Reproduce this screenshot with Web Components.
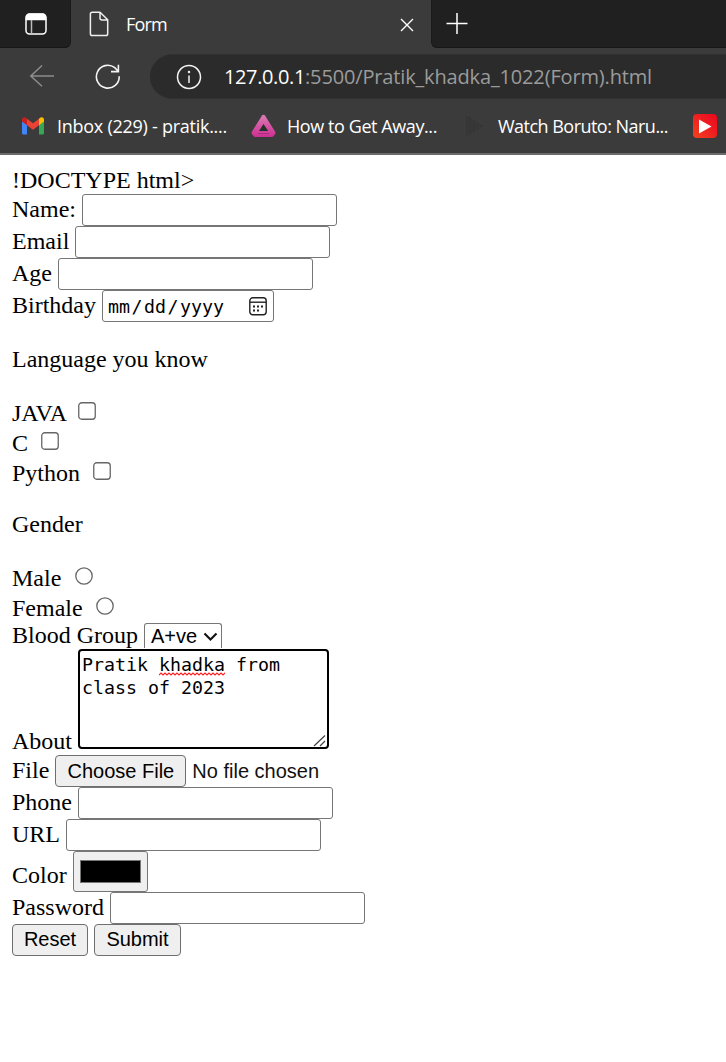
<!DOCTYPE html>
<html lang="en">
<head>
<meta charset="utf-8">
<title>Form</title>
<style>
body{margin:0;background:#fff;color:#000;font:24px/28px "Liberation Serif",serif}
</style>
</head>
<body>
<browser-chrome></browser-chrome>
<student-form></student-form>
<script>
const define=(name,css,html,ready)=>customElements.define(name,class extends HTMLElement{
  connectedCallback(){
    if(this.shadowRoot)return;
    const t=document.createElement('template');
    t.innerHTML=`<style>*{box-sizing:border-box}svg{display:block}${css}</style>${html}`;
    this.attachShadow({mode:'open'}).append(t.content.cloneNode(true));
    if(ready)ready(this,this.shadowRoot);
  }
});

/* Text that spreads its letters to fill the width given in its "w" attribute. */
define('fit-text',':host{display:block;flex:none;white-space:pre}span{display:inline-block}','<span><slot></slot></span>',(el,root)=>{
  const s=root.querySelector('span'),w=+el.getAttribute('w');
  el.style.width=w+'px';
  s.style.letterSpacing=(w-s.getBoundingClientRect().width)/el.textContent.length+'px';
});

define('book-mark',`:host{display:flex;align-items:center;height:28px;flex:none;gap:var(--gap,12px)}
.icon{display:flex}`,'<span class="icon"><slot name="icon"></slot></span><slot></slot>');

define('browser-chrome',`
:host{display:block;box-sizing:border-box;height:155px;background:#3b3b3b;border-bottom:2px solid #6b6b6b;color:#fff;font:18px/28px "Open Sans","Noto Sans",sans-serif;overflow:hidden}
.tabs{display:flex;height:48px;background:#3b3b3b}
.lead{width:71px;background:#202020;border-radius:0 0 6px 0;border-bottom:1px solid #161616;border-right:1px solid #1a1a1a;padding:13px 0 0 25px}
.tab{width:360px;display:flex;background:#3b3b3b;padding:0 0 0 18px;position:relative}
.tab fit-text{margin:10px 0 0 17px}
.tab .doc{margin-top:11px}
.tab .x{margin:18px 0 0 233px}
.rest{flex:1;background:#202020;border-radius:0 0 0 6px;border-bottom:1px solid #161616;border-left:1px solid #1a1a1a;padding:13px 0 0 14px}
.nav{display:flex;height:51px;padding:6px 0 0 28px}
.back{margin-top:10px}.load{margin:9px 0 0 39px}
.bar{flex:1;margin-left:28px;height:45px;background:#2b2b2b;border-radius:23px 0 0 23px;display:flex;align-items:center;padding-left:26px;font-size:20px;border-top:1px solid #303030;border-bottom:1px solid #303030}
.host{margin-left:22px}.path{color:#9b9b9b}
.marks{display:flex;height:54px;padding:13px 0 0 22px;font-size:18px}
.b1{--gap:13px}.b2{margin-left:24px;--gap:11px}.b3{margin-left:26px;--gap:13px}.b4{margin-left:25px}
`,`
<div class="tabs">
 <div class="lead"><svg width="22" height="22" viewBox="0 0 22 22" fill="none" stroke="#fff" stroke-width="1.5"><rect x="1" y="1" width="20" height="20" rx="3.5"/><path d="M1.5 4.5A3 3 0 0 1 4.5 1.3h13a3 3 0 0 1 3 3.2v2h-19z" fill="#fff"/><path d="M6.5 7v14" stroke="#bbb"/></svg></div>
 <div class="tab"><svg class="doc" width="20" height="26" viewBox="0 0 20 26" fill="none" stroke="#eee" stroke-width="1.5" stroke-linejoin="round"><path d="M3.2 1.2h7.8l7.7 7.6v14a1.8 1.8 0 0 1-1.8 1.8H3.2a1.8 1.8 0 0 1-1.8-1.8V3a1.8 1.8 0 0 1 1.8-1.8zM11 1.4V7a2 2 0 0 0 2 2h5.5"/></svg><fit-text w="41">Form</fit-text><svg class="x" width="14" height="14" viewBox="0 0 14 14" stroke="#fff" stroke-width="1.4"><path d="M1 1l12 12M13 1L1 13"/></svg></div>
 <div class="rest"><svg width="22" height="22" viewBox="0 0 22 22" stroke="#fff" stroke-width="1.5"><path d="M.5 10.5h21M11 0v21"/></svg></div>
</div>
<div class="nav">
 <svg class="back" width="27" height="24" viewBox="0 0 27 24" fill="none" stroke="#8d8d8d" stroke-width="1.5"><path d="M14 1.5L2.8 12 14 22.2M2.8 12H26"/></svg>
 <svg class="load" width="28" height="28" viewBox="0 0 28 28" fill="none" stroke="#f4f4f4" stroke-width="1.6"><path d="M25.2 13.2A11.4 11.4 0 1 1 20.8 4.7L24 8M24.4 1.8v6.8H17"/></svg>
 <div class="bar"><svg width="26" height="26" viewBox="0 0 26 26" fill="none" stroke="#f4f4f4" stroke-width="1.5"><circle cx="13" cy="13" r="11.5"/><path d="M13 11.5V19"/><circle cx="13" cy="8" r=".5"/></svg><fit-text class="host" w="81">127.0.0.1</fit-text><fit-text class="path" w="347">:5500/Pratik_khadka_1022(Form).html</fit-text></div>
</div>
<div class="marks">
 <book-mark class="b1"><svg slot="icon" width="22" height="18" viewBox="0 0 22 18"><path d="M0 3.5L5 7v10.5H1.5A1.5 1.5 0 0 1 0 16z" fill="#4285f4"/><path d="M22 3.5L17 7v10.5h3.5A1.5 1.5 0 0 0 22 16z" fill="#34a853"/><path d="M17 1.8L18.5.6C20-.5 22 .6 22 2.4v2L17 8.2z" fill="#fbbc04"/><path d="M5 1.8l6 4.5 6-4.5v6.4l-6 4.5-6-4.5z" fill="#ea4335"/><path d="M0 4.4v-2C0 .6 2-.5 3.5.6L5 1.8v6.4z" fill="#c5221f"/></svg><fit-text w="170">Inbox (229) - pratik....</fit-text></book-mark>
 <book-mark class="b2"><svg slot="icon" width="25" height="24" viewBox="0 0 25 24"><defs><linearGradient id="g" x2="0" y2="1"><stop stop-color="#dc7db4"/><stop offset="1" stop-color="#cc2f92"/></linearGradient></defs><path d="M11 1.5Q12.4 0 14 1.5L24.3 18v2L21.5 23h-18L.7 20v-2z" fill="url(#g)"/><path d="M12.5 10L8 17h9.2z" fill="#25302b"/><path d="M7 19.5h11" stroke="#a92d7c"/></svg><fit-text w="150">How to Get Away...</fit-text></book-mark>
 <book-mark class="b3"><svg slot="icon" width="22" height="26" viewBox="0 0 22 26"><path d="M3 2v22l17-11z" fill="#353535"/><path d="M5 2v22M9 6v14M13 8v10M16 10v6" stroke="#3e3e3e" stroke-dasharray="2 1"/></svg><fit-text w="170">Watch Boruto: Naru...</fit-text></book-mark>
 <book-mark class="b4"><svg slot="icon" width="24" height="24" viewBox="0 0 24 24"><defs><linearGradient id="r" x1="0" y1="1" x2="1" y2="0"><stop stop-color="#f0431f"/><stop offset=".6" stop-color="#ef1b20"/><stop offset="1" stop-color="#e9071d"/></linearGradient></defs><rect width="24" height="24" rx="4" fill="url(#r)"/><path d="M6 5.5v14L18.5 12.5z" fill="#fff"/></svg></book-mark>
</div>`);

/* One line of the form: a label and, after a word space, its control. */
define('form-row',`:host{display:flex;gap:6px;height:32px;white-space:pre}
.label{flex:none;padding-top:var(--drop,1px)}`,'<span class="label"><slot name="label"></slot></span><slot></slot>');

define('text-field',':host{display:block;box-sizing:border-box;width:255px;height:32px;border:1px solid #767676;border-radius:3px;background:#fff}','');

define('push-button',':host{display:block;box-sizing:border-box;flex:none;height:32px;border:1px solid #6f6f6f;border-radius:4px;background:#efefef;font:20px/28px "Liberation Sans",sans-serif;text-align:center;padding-top:var(--drop,1px)}','<slot></slot>');

define('tick-box',':host{display:block;width:18px;height:18px;margin:3px 0 0 6px}','<svg width="18" height="18"><rect x=".75" y=".75" width="16.5" height="16.5" rx="3" fill="#fff" stroke="#666" stroke-width="1.3"/></svg>');
define('radio-dot',':host{display:block;width:18px;height:18px;margin:3px 0 0 7.5px}','<svg width="18" height="18"><circle cx="9" cy="9" r="8.2" fill="#fff" stroke="#666" stroke-width="1.3"/></svg>');

define('date-field',`:host{display:flex;box-sizing:border-box;width:172px;height:32px;border:1px solid #767676;border-radius:3px;background:#fff;font:18.3px/28px "DejaVu Sans Mono",monospace;padding:2px 0 0 5px}
fit-text+fit-text{margin-left:1.5px}svg{margin:4px 0 0 25px}`,
`<fit-text w="22">mm</fit-text><fit-text w="11">/</fit-text><fit-text w="22">dd</fit-text><fit-text w="11">/</fit-text><fit-text w="44">yyyy</fit-text><svg width="18" height="19" viewBox="0 0 18 19" fill="none" stroke="#222" stroke-width="1.4"><rect x=".8" y=".8" width="16.4" height="17" rx="3"/><path d="M1 5.2h16"/><path d="M4 9.5h2M8 9.5h2M12 9.5h2M4 13.5h2M8 13.5h2" stroke-width="2"/></svg>`);

define('drop-down',`:host{display:flex;box-sizing:border-box;width:78px;height:25px;margin-top:2px;border:1px solid #767676;border-bottom:0;border-radius:3px 3px 0 0;font:20px/24px "Liberation Sans",sans-serif;padding-left:6px}
.value{width:46px}svg{margin:8px 0 0 6px}`,'<span class="value"><slot></slot></span><svg width="15" height="10" viewBox="0 0 15 10" fill="none" stroke="#111" stroke-width="2.1"><path d="M1.5 1.5l6 6 6-6"/></svg>');

define('text-area',`:host{display:block;box-sizing:border-box;position:relative;width:251px;height:100px;border:2.5px solid #000;border-radius:4px;background:#fff;font:18.3px/23px "DejaVu Sans Mono",monospace;padding:2px 0 0 2px}
.line{display:flex;height:23px}.bad{position:relative}
.wave{position:absolute;left:0;top:19px}.grip{position:absolute;right:0;bottom:0}`,
`<div class="line"><fit-text w="77">Pratik </fit-text><span class="bad"><fit-text w="66">khadka</fit-text><svg class="wave" width="66" height="4" fill="none" stroke="#f22" stroke-width="1.2"><path d="M0 3${'l2-2l2 2'.repeat(17)}"/></svg></span><fit-text w="55"> from</fit-text></div><div class="line"><fit-text w="143">class of 2023</fit-text></div>
<svg class="grip" width="14" height="13" viewBox="0 0 14 13" stroke="#444" stroke-width="1.2"><path d="M1 12L12 1.5M7 12l5-5"/></svg>`);

define('color-well',':host{display:block;box-sizing:border-box;width:75px;height:41px;border:1px solid #767676;border-radius:3px;background:#efefef;padding:8px 6px}.swatch{height:23px;background:#000;border:1px solid #777}','<div class="swatch"></div>');

define('student-form',`
:host{display:block;padding:11px 12px 0}
.text{height:28px}.choice{height:30px;--drop:0}
.gap{margin:23px 0 26px}.gap2{margin:21px 0 26px}
.blood{height:28px;--drop:0}.about{height:106px;--drop:78px}
.color{height:41px;--drop:10px}
.chosen{font:20px/28px "Liberation Sans",sans-serif;padding-top:2px;color:#111}
.actions{display:flex;gap:6px;--drop:0}
.file{--drop:1px}
`,`
<div class="text">!DOCTYPE html&gt;</div>
<form-row><span slot="label">Name:</span><text-field></text-field></form-row>
<form-row><span slot="label">Email</span><text-field></text-field></form-row>
<form-row><span slot="label">Age</span><text-field></text-field></form-row>
<form-row><span slot="label">Birthday</span><date-field></date-field></form-row>
<div class="text gap">Language you know</div>
<form-row class="choice"><span slot="label">JAVA</span><tick-box style="margin-left:5px"></tick-box></form-row>
<form-row class="choice"><span slot="label">C</span><tick-box style="margin-left:6.5px"></tick-box></form-row>
<form-row class="choice"><span slot="label">Python</span><tick-box style="margin-left:6.5px"></tick-box></form-row>
<div class="text gap2">Gender</div>
<form-row class="choice"><span slot="label">Male</span><radio-dot></radio-dot></form-row>
<form-row class="choice" style="height:27px"><span slot="label">Female</span><radio-dot></radio-dot></form-row>
<form-row class="blood"><span slot="label">Blood Group</span><drop-down>A+ve</drop-down></form-row>
<form-row class="about"><span slot="label">About</span><text-area></text-area></form-row>
<form-row class="file"><span slot="label">File</span><push-button style="width:131px">Choose File</push-button><span class="chosen">No file chosen</span></form-row>
<form-row><span slot="label">Phone</span><text-field></text-field></form-row>
<form-row style="gap:5.5px"><span slot="label">URL</span><text-field></text-field></form-row>
<form-row class="color"><span slot="label">Color</span><color-well></color-well></form-row>
<form-row><span slot="label">Password</span><text-field></text-field></form-row>
<div class="actions"><push-button style="width:76px">Reset</push-button><push-button style="width:87px">Submit</push-button></div>
`);
</script>
</body>
</html>
